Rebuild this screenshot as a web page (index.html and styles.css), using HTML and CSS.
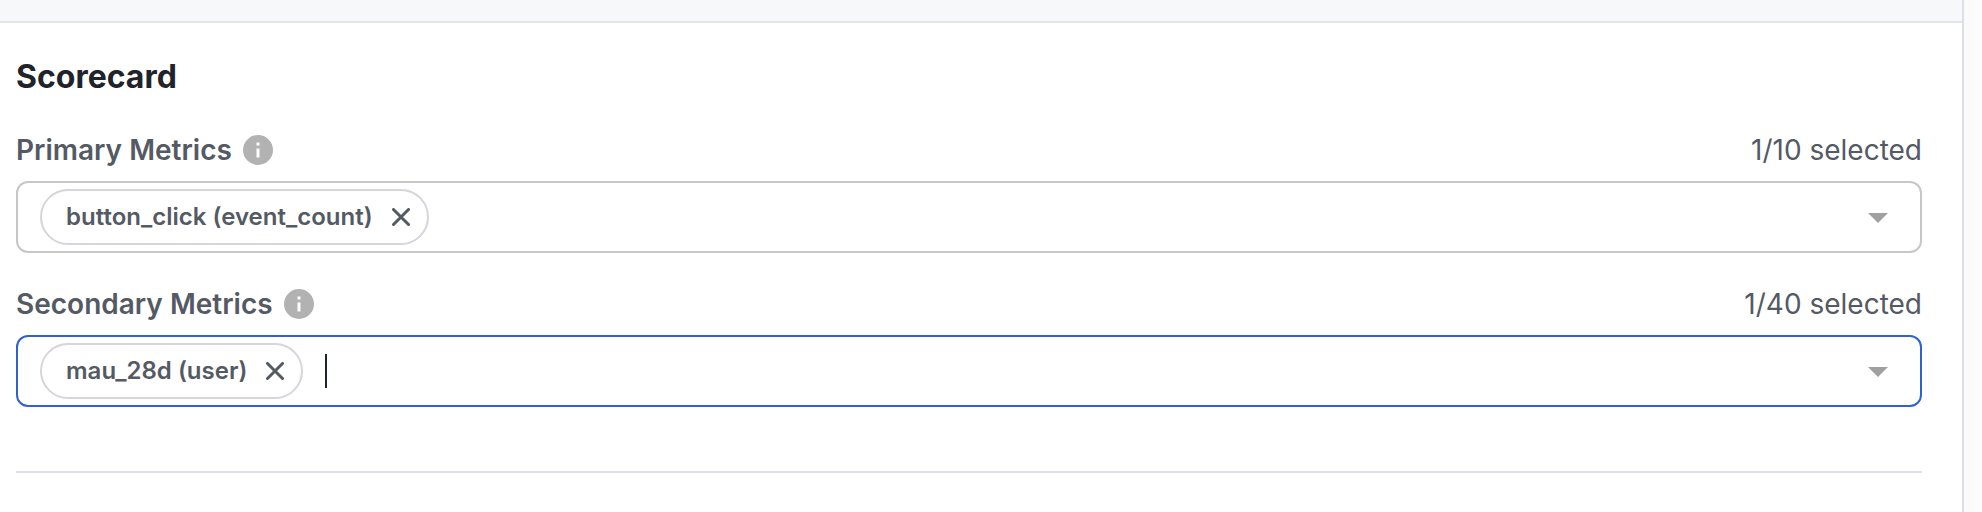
FILE: index.html
```html
<!DOCTYPE html>
<html lang="en">
<head>
<meta charset="utf-8">
<title>Scorecard</title>
<link rel="stylesheet" href="styles.css">
</head>
<body>
<main class="panel">
  <div class="band"></div>
  <section class="scorecard">
    <h2 class="title">Scorecard</h2>
    <div class="field">
      <div class="field-head">
        <span class="label">Primary Metrics</span>
        <svg class="info" viewBox="2 2 20 20"><path d="M12 2a10 10 0 1 0 0 20 10 10 0 0 0 0-20zm1 15h-2v-6h2v6zm0-8h-2V7h2v2z"/></svg>
        <span class="count">1/10 selected</span>
      </div>
      <div class="select">
        <div class="chip"><span class="chip-text">button_click (event_count)</span><svg class="close" viewBox="0 0 18 18"><path d="M1.5 1.5l15 15M16.5 1.5l-15 15"/></svg></div>
        <svg class="arrow" viewBox="0 0 24 24"><path d="M7 10l5 5 5-5z"/></svg>
      </div>
    </div>
    <div class="field">
      <div class="field-head">
        <span class="label">Secondary Metrics</span>
        <svg class="info" viewBox="2 2 20 20"><path d="M12 2a10 10 0 1 0 0 20 10 10 0 0 0 0-20zm1 15h-2v-6h2v6zm0-8h-2V7h2v2z"/></svg>
        <span class="count">1/40 selected</span>
      </div>
      <div class="select focused">
        <div class="chip"><span class="chip-text">mau_28d (user)</span><svg class="close" viewBox="0 0 18 18"><path d="M1.5 1.5l15 15M16.5 1.5l-15 15"/></svg></div>
        <span class="caret"></span>
        <svg class="arrow" viewBox="0 0 24 24"><path d="M7 10l5 5 5-5z"/></svg>
      </div>
    </div>
  </section>
</main>
</body>
</html>
```
FILE: styles.css
```css
* { box-sizing: border-box; }
body {
  margin: 0;
  height: 512px;
  overflow: hidden;
  background: linear-gradient(to right, #fafafb 1964px, #fdfdfd 1982px);
  font-family: Inter, sans-serif;
  color: #545a64;
}
.panel {
  width: 1964px;
  height: 512px;
  border-right: 2px solid #dce0e6;
  background: #fff;
}
.band {
  height: 23px;
  background: #f7f8fa;
  border-bottom: 2px solid #e4e5ea;
}
.scorecard {
  margin: 0 40px 0 16px;
  padding-top: 34px;
  height: 450px;
  border-bottom: 2px solid #dce0e5;
}
.title {
  margin: 0 0 33px;
  font-size: 32px;
  line-height: 40px;
  font-weight: 700;
  color: #1f232a;
}
.field { margin-bottom: 31px; }
.field-head {
  display: flex;
  align-items: center;
  height: 40px;
  margin-bottom: 11px;
  font-size: 28px;
  line-height: 40px;
}
.label { font-weight: 600; }
.info {
  width: 30px;
  height: 30px;
  margin-left: 11px;
  fill: #b2b2b2;
}
.count { margin-left: auto; }
.select {
  display: flex;
  align-items: center;
  height: 72px;
  padding: 0 18px 0 22px;
  border: 2px solid #c7c7c7;
  border-radius: 12px;
}
.select.focused { border-color: #2f62d0; }
.chip {
  display: flex;
  align-items: center;
  height: 56px;
  padding: 0 17px 0 24px;
  border: 2px solid #d5d5dc;
  border-radius: 28px;
  font-size: 24px;
  line-height: 32px;
  font-weight: 600;
}
.close {
  width: 18px;
  height: 18px;
  margin-left: 19px;
  fill: none;
  stroke: #545a64;
  stroke-width: 3;
  stroke-linecap: round;
}
.caret {
  width: 2px;
  height: 34px;
  margin-left: 22px;
  background: #1f232a;
}
.arrow {
  width: 48px;
  height: 48px;
  margin-left: auto;
  fill: #a0a0a0;
}
```
